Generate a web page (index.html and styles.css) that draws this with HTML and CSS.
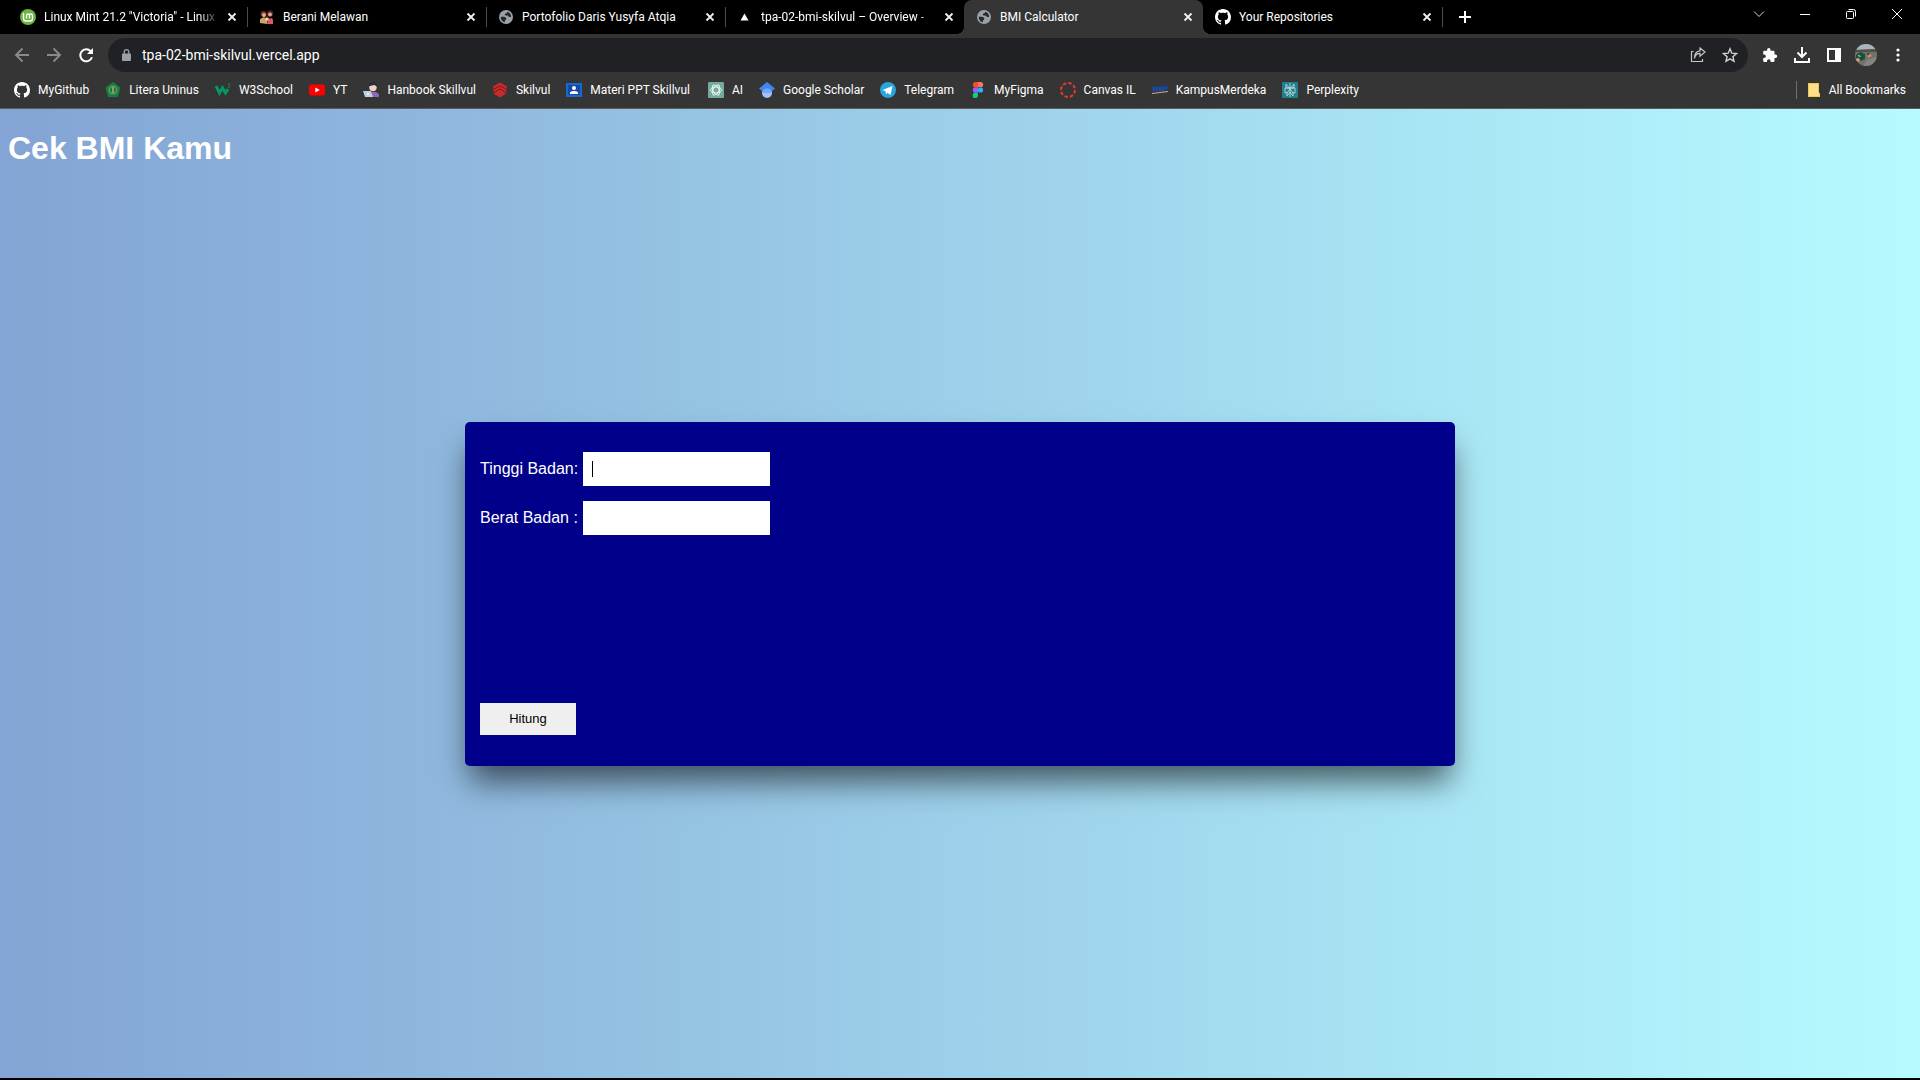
FILE: index.html
```html
<!DOCTYPE html>
<html lang="id">
<head>
<meta charset="utf-8">
<title>BMI Calculator</title>
<link rel="stylesheet" href="styles.css">
</head>
<body>
<svg class="defs" aria-hidden="true">
  <symbol id="github" viewBox="0 0 16 16"><path fill="#fff" d="M8 0C3.58 0 0 3.58 0 8c0 3.54 2.29 6.53 5.47 7.59.4.07.55-.17.55-.38 0-.19-.01-.82-.01-1.49-2.01.37-2.53-.49-2.69-.94-.09-.23-.48-.94-.82-1.13-.28-.15-.68-.52-.01-.53.63-.01 1.08.58 1.23.82.72 1.21 1.87.87 2.33.66.07-.52.28-.87.51-1.07-1.78-.2-3.64-.89-3.64-3.95 0-.87.31-1.59.82-2.15-.08-.2-.36-1.02.08-2.12 0 0 .67-.21 2.2.82.64-.18 1.32-.27 2-.27s1.36.09 2 .27c1.53-1.04 2.2-.82 2.2-.82.44 1.1.16 1.92.08 2.12.51.56.82 1.27.82 2.15 0 3.07-1.87 3.75-3.65 3.95.29.25.54.73.54 1.48 0 1.07-.01 1.93-.01 2.2 0 .21.15.46.55.38A8.01 8.01 0 0 0 16 8c0-4.42-3.58-8-8-8z"/></symbol>
  <symbol id="globe" viewBox="0 0 24 24"><circle cx="12" cy="12" r="10.500" fill="#9aa0a6"/><path fill="#26272a" d="M4.200 11.500h4.300c2 0 2.500 1.200 3.800 1.500v2.500c0 1.200-2 1.200-2 2.200v2.300c-3.800-.7-6.300-4-6.100-8.500zM14 4.300c3.200.9 5.500 3.700 5.800 7.200-1 .6-2.300.7-3.300.2-1.200-.7-1-1.700-2.300-1.900-1.700-.3-3.800.2-4-1.300-.1-1.300 1-1.900 2.300-2.200.9-.2 1.500-.9 1.500-2z"/></symbol>
  <symbol id="close" viewBox="0 0 10 10"><path d="M1.500 1.500l7 7m0-7l-7 7" fill="none" stroke="#f1f1f1" stroke-width="1.800"/></symbol>
</svg>

<header class="browser">
  <nav class="tabstrip" aria-label="Tabs">
    <div class="tabs">
      <div class="tab">
        <svg class="icon" viewBox="0 0 16 16"><circle cx="8" cy="8" r="8" fill="#69b53f"/><path d="M3.500 4v5.500a2.500 2.500 0 0 0 2.500 2.500h4a2.500 2.500 0 0 0 2.500-2.500V6.500a1.500 1.500 0 0 0-3 0V9.500M9.500 6.500a1.500 1.500 0 0 0-3 0V9.500" fill="none" stroke="#fff" stroke-width="1.400"/></svg>
        <span class="tab-title fade">Linux Mint 21.2 "Victoria" - Linux</span>
        <button class="tab-close" aria-label="Close tab"><svg viewBox="0 0 10 10"><use href="#close"/></svg></button>
      </div>
      <div class="tab">
        <svg class="icon" viewBox="0 0 16 16"><circle cx="4.500" cy="5" r="3" fill="#6a3429"/><circle cx="5" cy="6" r="2" fill="#eda78f"/><circle cx="11" cy="4.500" r="3.200" fill="#3d2827"/><circle cx="11" cy="5.500" r="2" fill="#e7a28c"/><path fill="#caa365" d="M1 14V10l4-2 3 3v4z"/><path fill="#e35764" d="M8 15l1-5 4-1 1 2v4z"/><circle cx="8" cy="10" r="1.800" fill="#f2d5c4"/><path fill="#7d4a32" d="M6 9l2-2 2 2z"/></svg>
        <span class="tab-title">Berani Melawan</span>
        <button class="tab-close" aria-label="Close tab"><svg viewBox="0 0 10 10"><use href="#close"/></svg></button>
      </div>
      <div class="tab">
        <svg class="icon" viewBox="0 0 16 16"><use href="#globe"/></svg>
        <span class="tab-title">Portofolio Daris Yusyfa Atqia</span>
        <button class="tab-close" aria-label="Close tab"><svg viewBox="0 0 10 10"><use href="#close"/></svg></button>
      </div>
      <div class="tab no-rule">
        <svg class="icon" viewBox="0 0 16 16"><path fill="#fff" d="M7.500 4.500l4 7h-8z"/></svg>
        <span class="tab-title fade">tpa-02-bmi-skilvul – Overview -</span>
        <button class="tab-close" aria-label="Close tab"><svg viewBox="0 0 10 10"><use href="#close"/></svg></button>
      </div>
      <div class="tab active no-rule">
        <svg class="icon" viewBox="0 0 16 16"><use href="#globe"/></svg>
        <span class="tab-title">BMI Calculator</span>
        <button class="tab-close" aria-label="Close tab"><svg viewBox="0 0 10 10"><use href="#close"/></svg></button>
      </div>
      <div class="tab">
        <svg class="icon" viewBox="0 0 16 16"><use href="#github"/></svg>
        <span class="tab-title">Your Repositories</span>
        <button class="tab-close" aria-label="Close tab"><svg viewBox="0 0 10 10"><use href="#close"/></svg></button>
      </div>
      <button class="new-tab" aria-label="New tab"><svg viewBox="0 0 12 12"><path d="M6 0v12M0 6h12" stroke="#fff" stroke-width="2"/></svg></button>
    </div>
    <div class="window-controls">
      <button aria-label="Search tabs"><svg viewBox="0 0 12 12"><path d="M1 3.500l5 5 5-5" fill="none" stroke="#ddd"/></svg></button>
      <button aria-label="Minimize"><svg viewBox="0 0 12 12"><path d="M1 6.500h10" stroke="#fff"/></svg></button>
      <button aria-label="Restore"><svg viewBox="0 0 12 12"><rect x="1.500" y="3.500" width="7" height="7" rx="1" fill="none" stroke="#fff"/><path d="M3.500 1.500h5a2 2 0 0 1 2 2v5" fill="none" stroke="#fff"/></svg></button>
      <button aria-label="Close window"><svg viewBox="0 0 12 12"><path d="M1 1l10 10M11 1L1 11" stroke="#fff"/></svg></button>
    </div>
  </nav>

  <div class="toolbar">
    <div class="nav-buttons">
      <button aria-label="Back"><svg viewBox="0 0 16 16"><path d="M15 8H2M8.500 1.500L2 8l6.500 6.500" fill="none" stroke="#8a8a8a" stroke-width="1.900"/></svg></button>
      <button aria-label="Forward"><svg viewBox="0 0 16 16"><path d="M1 8h13M7.500 1.500L14 8l-6.500 6.500" fill="none" stroke="#8a8a8a" stroke-width="1.900"/></svg></button>
      <button aria-label="Reload"><svg viewBox="0 0 16 16"><path d="M14 10.200A6 6 0 1 1 12.700 4.200" fill="none" stroke="#fff" stroke-width="2"/><path fill="#fff" d="M15 1v6H9z"/></svg></button>
    </div>
    <div class="omnibox">
      <svg class="lock" viewBox="0 0 10 12"><path fill="#9aa0a6" d="M1 4.500h7a1 1 0 0 1 1 1V11a1 1 0 0 1-1 1H1a1 1 0 0 1-1-1V5.500a1 1 0 0 1 1-1z"/><path d="M2.200 5V3a2.300 2.300 0 0 1 4.600 0v2" fill="none" stroke="#9aa0a6" stroke-width="1.300"/></svg>
      <input class="url" type="text" aria-label="Address" value="tpa-02-bmi-skilvul.vercel.app">
      <button aria-label="Share"><svg viewBox="0 0 16 16"><path d="M3.500 4.500H1.500v10h11V12M4.500 11.500c.4-3.500 2.500-5.200 5.500-5.200v2.900L15 5l-5-4v2.800C6.500 4 4.500 7 4.500 11.500z" fill="none" stroke="#c4c7c5" stroke-width="1.200"/></svg></button>
      <button aria-label="Bookmark this tab"><svg viewBox="0 0 16 16"><path d="M8 1.800l1.800 4.400 4.700.4-3.600 3.100 1.100 4.600-4-2.500-4 2.500 1.100-4.600-3.600-3.100 4.700-.4z" fill="none" stroke="#d0d3d1" stroke-width="1.400"/></svg></button>
    </div>
    <div class="actions">
      <button aria-label="Extensions"><svg viewBox="0 0 16 16"><path fill="#fff" d="M13.500 7.500h-1V5a1.300 1.300 0 0 0-1.300-1.300H8.500v-1a1.700 1.700 0 0 0-3.400 0v1H2.500A1.300 1.300 0 0 0 1.200 5v2.500h.9a1.800 1.800 0 0 1 0 3.600h-.9v2.600A1.300 1.300 0 0 0 2.500 15h2.500v-.9a1.800 1.800 0 0 1 3.600 0v.9h2.600a1.300 1.300 0 0 0 1.300-1.300v-2.800h1a1.700 1.700 0 0 0 0-3.400z"/></svg></button>
      <button aria-label="Downloads"><svg viewBox="0 0 16 16"><path d="M8 0v9M3.500 5.500L8 10l4.500-4.500M1 11v4h14v-4" fill="none" stroke="#fff" stroke-width="2"/></svg></button>
      <button aria-label="Side panel"><svg viewBox="0 0 16 16"><path fill="#fff" fill-rule="evenodd" d="M1 1h14v14H1zM3 3v10h6V3z"/></svg></button>
      <button class="profile" aria-label="Profile"><svg viewBox="0 0 22 22"><clipPath id="round"><circle cx="11" cy="11" r="11"/></clipPath><g clip-path="url(#round)"><path fill="#74716a" d="M0 0h22v22H0z"/><path fill="#a9b4c0" d="M0 0h22v5L0 6z"/><path fill="#565044" d="M0 6l22-1v3L0 8z"/><path fill="#14523f" d="M1 11l4-3 5 2v5l-4 2-5-1z"/><path fill="#e0a36b" d="M0 15l4-1 1 3-4 1z"/><path fill="#b9cfc4" d="M3 11l3 1-1 1-2-1z"/><path fill="#282b28" d="M12 9l5 1-2 4z"/><path fill="#bd8f70" d="M12 12l4-3 1 3-3 2z"/><path fill="#85847e" d="M8 22l4-6 9-3v9z"/></g></svg></button>
      <button aria-label="Menu"><svg viewBox="0 0 16 16"><g fill="#fff"><circle cx="8" cy="3" r="1.600"/><circle cx="8" cy="8" r="1.600"/><circle cx="8" cy="13" r="1.600"/></g></svg></button>
    </div>
  </div>

  <nav class="bookmarks" aria-label="Bookmarks">
    <a href="#"><svg class="icon" viewBox="0 0 16 16"><use href="#github"/></svg>MyGithub</a>
    <a href="#"><svg class="icon" viewBox="0 0 16 16"><path fill="#128045" d="M8 0l7.500 5.500L13 15H3L.5 5.500z"/><circle cx="8" cy="8" r="4.500" fill="#6c9c36"/><circle cx="8" cy="8" r="3" fill="#226d65"/><path d="M8 5v6" stroke="#e0d78b"/></svg>Litera Uninus</a>
    <a href="#"><svg class="icon" viewBox="0 0 16 16"><path d="M1 4l3.500 7L7.500 6l3 5L13 7" fill="none" stroke="#059862" stroke-width="3"/><path d="M13 2h2l-1 1.500q2 .5 0 2h-1" fill="none" stroke="#059862" stroke-width=".8"/></svg>W3School</a>
    <a href="#"><svg class="icon" viewBox="0 0 16 16"><rect y="2.500" width="16" height="11" rx="2.500" fill="#f00"/><path fill="#fff" d="M6.300 5.500l4.400 2.500-4.400 2.500z"/></svg>YT</a>
    <a href="#"><svg class="icon" viewBox="0 0 16 16"><path fill="#8f66bd" d="M8 15l1-5h4l3 2v3z"/><circle cx="10" cy="5.500" r="3.700" fill="#f3d2c3"/><path fill="#242d3b" d="M5.500 4q1-4 5-4 4 1 4 5l-3-2-5 1z"/><path fill="#bfd0df" d="M0 9h8l2 6H2z"/><circle cx="5" cy="12" r="1" fill="#fff"/></svg>Hanbook Skillvul</a>
    <a href="#"><svg class="icon" viewBox="0 0 16 16"><path fill="#c92b2b" d="M8 .5l7 4-1 7L8 15.500 2 12 1 4.500z"/><path d="M1 7.500L8 4l7 3.500M2 10.500L8 7l6 3.500" fill="none" stroke="#761c23"/></svg>Skilvul</a>
    <a href="#"><svg class="icon" viewBox="0 0 16 16"><path fill="#1967d2" d="M0 1h16v14H0z"/><path fill="#164aa0" d="M2 3h12v10H2z"/><circle cx="8" cy="6" r="2" fill="#fff"/><path fill="#fff" d="M4 12v-1q0-2 4-2t4 2v1z"/></svg>Materi PPT Skillvul</a>
    <a class="spaced" href="#"><svg class="icon" viewBox="0 0 16 16"><rect width="16" height="16" rx="1" fill="#74aa9c"/><g fill="none" stroke="#eef7f4" stroke-width=".9"><ellipse cx="8" cy="8" rx="5.500" ry="3"/><ellipse cx="8" cy="8" rx="5.500" ry="3" transform="rotate(60 8 8)"/><ellipse cx="8" cy="8" rx="5.500" ry="3" transform="rotate(120 8 8)"/></g></svg>AI</a>
    <a href="#"><svg class="icon" viewBox="0 0 16 16"><circle cx="8" cy="11" r="5" fill="#a0c3ff"/><path fill="#4285f4" d="M8 0L0 6.500l3.500 3a5 5 0 0 1 9 0l3.500-3z"/><path fill="#76a7fa" d="M3.500 9a5 5 0 0 1 9 0l-1 2H4.500z"/></svg>Google Scholar</a>
    <a href="#"><svg class="icon" viewBox="0 0 16 16"><circle cx="8" cy="8" r="8" fill="#2ba4dc"/><path fill="#fff" d="M2.500 8l10-4-2 9-3-2.200-1.500 1.500L5.500 9.300zM6 9.500l5-4-4 5z"/></svg>Telegram</a>
    <a href="#"><svg class="icon" viewBox="0 0 16 16"><path fill="#f24e1e" d="M8 0H5.500a2.600 2.600 0 0 0 0 5.300H8z"/><path fill="#ff7262" d="M8 0h2.500a2.600 2.600 0 0 1 0 5.300H8z"/><path fill="#a259ff" d="M8 5.300H5.500a2.600 2.600 0 0 0 0 5.300H8z"/><circle cx="10.500" cy="8" r="2.600" fill="#1abcfe"/><path fill="#0acf83" d="M8 10.600H5.500A2.700 2.700 0 1 0 8 13.300z"/></svg>MyFigma</a>
    <a href="#"><svg class="icon" viewBox="0 0 16 16"><circle cx="8" cy="8" r="7" fill="none" stroke="#e23b30" stroke-width="2" stroke-dasharray="3.500 2"/></svg>Canvas IL</a>
    <a href="#"><svg class="icon" viewBox="0 0 16 16"><path fill="#173e78" d="M0 4l16-1v7L0 11z"/><path d="M1 6h14M1 8h12" stroke="#345e96" stroke-dasharray="2 1"/><path fill="#e6a16b" d="M0 11l16-2v1L0 12z"/></svg>KampusMerdeka</a>
    <a href="#"><svg class="icon" viewBox="0 0 16 16"><path fill="#20808d" d="M0 0h16v16H0z"/><path d="M8 1v14M4 2l4 5 4-5v4H4zM3 6h10v5h-2L8 7l-3 4H3zM5 10v4l3-4 3 4v-4" fill="none" stroke="#b9d8da" stroke-width=".9"/></svg>Perplexity</a>
    <a class="all" href="#"><svg class="icon folder" viewBox="0 0 12 14"><path fill="#ffe08a" d="M0 0h11v10h1v4H0z"/><path d="M.5.500h10v9.500h1v3.500H.5z" fill="none" stroke="#eec850"/></svg>All Bookmarks</a>
  </nav>
</header>

<main class="page">
  <h1>Cek BMI Kamu</h1>
  <form class="card">
    <div class="field">
      <label for="height">Tinggi Badan:</label>
      <span class="entry"><input id="height" type="text"><span class="caret"></span></span>
    </div>
    <div class="field">
      <label for="weight">Berat Badan :</label>
      <span class="entry"><input id="weight" type="text"></span>
    </div>
    <button class="submit" type="button">Hitung</button>
  </form>
</main>
</body>
</html>
```
FILE: styles.css
```css
* {
  box-sizing: border-box;
}

body {
  margin: 0;
  min-height: 100vh;
  display: flex;
  flex-direction: column;
  font-family: "Liberation Sans", Arial, sans-serif;
  border-bottom: 2px solid #000;
}

.defs {
  position: absolute;
  width: 0;
  height: 0;
}

.browser {
  background: #353535;
  border-bottom: 1px solid #5c5c5c;
  color: #fff;
  font-family: Roboto, "Noto Sans", sans-serif;
  font-size: 12px;
}

.browser button {
  display: flex;
  align-items: center;
  justify-content: center;
  flex: none;
  padding: 0;
  border: 0;
  background: none;
}

.icon {
  width: 16px;
  height: 16px;
  flex: none;
}

/* Tab strip */
.tabstrip {
  display: flex;
  height: 34px;
  background: #000;
}

.tabs {
  display: flex;
  flex: 1;
  padding-left: 8px;
  min-width: 0;
}

.tab {
  position: relative;
  display: flex;
  align-items: center;
  gap: 8px;
  flex: 0 1 239px;
  min-width: 0;
  padding: 0 10px 0 12px;
}

.tab:not(.no-rule)::after {
  content: "";
  position: absolute;
  right: -1px;
  top: 7px;
  width: 1px;
  height: 20px;
  background: #4c4c4c;
}

.tab.active {
  background: #353535;
  border-radius: 8px 8px 0 0;
}

.tab.active::before,
.tab.active::after {
  content: "";
  position: absolute;
  bottom: 0;
  width: 8px;
  height: 8px;
}

.tab.active::before {
  right: 100%;
  background: radial-gradient(circle at 0 0, transparent 8px, #353535 8px);
}

.tab.active::after {
  left: 100%;
  background: radial-gradient(circle at 100% 0, transparent 8px, #353535 8px);
}

.tab-title {
  flex: 1;
  overflow: hidden;
  white-space: nowrap;
  line-height: 18px;
}

.tab-title.fade {
  mask-image: linear-gradient(to left, transparent, #000 20px);
}

.tab-close svg {
  width: 10px;
  height: 10px;
}

.new-tab {
  width: 46px;
}

.new-tab svg {
  width: 12px;
  height: 12px;
}

.window-controls {
  display: flex;
  height: 28px;
}

.window-controls button {
  width: 46px;
}

.window-controls svg {
  width: 12px;
  height: 12px;
}

/* Address bar */
.toolbar {
  display: flex;
  align-items: center;
  gap: 6px;
  padding: 4px 6px 0;
}

.nav-buttons,
.actions {
  display: flex;
}

.toolbar button {
  width: 32px;
  height: 32px;
}

.toolbar button svg {
  width: 16px;
  height: 16px;
}

.toolbar .profile svg {
  width: 22px;
  height: 22px;
}

.omnibox {
  display: flex;
  align-items: center;
  flex: 1;
  height: 34px;
  padding: 0 2px 0 14px;
  border-radius: 17px;
  background: #202124;
}

.lock {
  width: 10px;
  height: 12px;
  flex: none;
}

.url {
  flex: 1;
  min-width: 0;
  padding: 0 0 0 10px;
  border: 0;
  background: none;
  color: #fff;
  font: 14px/20px Roboto, "Noto Sans", sans-serif;
}

/* Bookmarks bar */
.bookmarks {
  display: flex;
  align-items: center;
  gap: 16px;
  height: 36px;
  padding: 0 14px;
}

.bookmarks a {
  display: flex;
  align-items: center;
  gap: 8px;
  color: inherit;
  line-height: 18px;
  text-decoration: none;
  white-space: nowrap;
}

.bookmarks .spaced {
  padding-left: 2px;
}

.bookmarks .all {
  margin-left: auto;
  padding-left: 10px;
  border-left: 1px solid #707070;
}

.bookmarks .folder {
  width: 14px;
  height: 14px;
}

/* BMI page */
.page {
  flex: 1;
  display: grid;
  grid-template: 1fr / 1fr;
  background: linear-gradient(to right, #83a4d4, #b6fbff);
}

.page h1 {
  grid-area: 1 / 1;
  margin: 21px 8px;
  color: #fff;
  font-size: 32px;
  line-height: 37px;
}

.card {
  grid-area: 1 / 1;
  place-self: center;
  display: flex;
  flex-direction: column;
  gap: 15px;
  box-sizing: content-box;
  width: 50%;
  min-height: 283px;
  padding: 30px 15px 31px;
  border-radius: 5px;
  background: #00008b;
  box-shadow: 0 20px 30px -5px rgba(0, 0, 0, .6);
  color: #fff;
  font-size: 16px;
}

.field {
  display: flex;
  align-items: center;
  gap: 5px;
}

.entry {
  position: relative;
  display: flex;
}

.entry input {
  width: 187px;
  height: 34px;
  padding: 8px;
  border: 0;
  background: #fff;
  font: 14px "Liberation Sans", Arial, sans-serif;
}

.caret {
  position: absolute;
  left: 9px;
  top: 9px;
  width: 1px;
  height: 16px;
  background: #000;
}

.submit {
  width: 96px;
  height: 32px;
  margin-top: auto;
  padding: 0;
  border: 0;
  background: #efefef;
  color: #000;
  font: 13px "Liberation Sans", Arial, sans-serif;
}
```
